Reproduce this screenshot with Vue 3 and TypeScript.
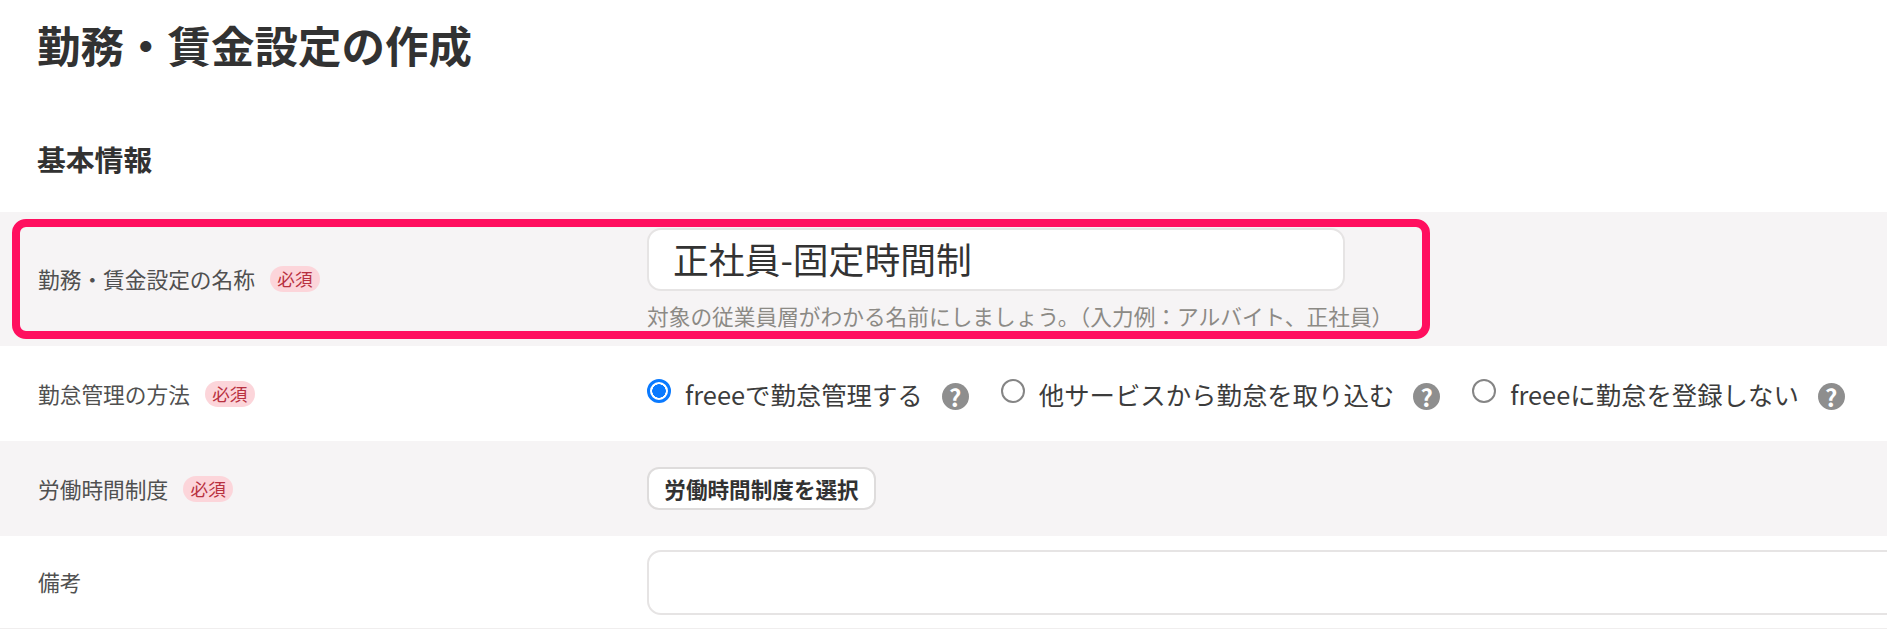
<script setup lang="ts">
interface Option { label: string; checked: boolean }
const options: Option[] = [
  { label: 'freeeで勤怠管理する', checked: true },
  { label: '他サービスから勤怠を取り込む', checked: false },
  { label: 'freeeに勤怠を登録しない', checked: false },
]
</script>

<template>
  <main class="page">
    <h1 class="title">勤務・賃金設定の作成</h1>
    <h2 class="section">基本情報</h2>

    <div class="row shaded first">
      <div class="label">勤務・賃金設定の名称<span class="badge">必須</span></div>
      <div class="value">
        <div class="input name">正社員-固定時間制</div>
        <p class="hint">対象の従業員層がわかる名前にしましょう。（入力例：アルバイト、正社員）</p>
      </div>
      <div class="highlight"></div>
    </div>

    <div class="row second">
      <div class="label">勤怠管理の方法<span class="badge">必須</span></div>
      <div class="value radios">
        <div v-for="o in options" :key="o.label" class="option">
          <span class="radio" :class="{ on: o.checked }"></span>
          <span class="radio-text">{{ o.label }}</span>
          <span class="help">?</span>
        </div>
      </div>
    </div>

    <div class="row shaded third">
      <div class="label">労働時間制度<span class="badge">必須</span></div>
      <div class="value">
        <button class="btn" type="button">労働時間制度を選択</button>
      </div>
    </div>

    <div class="row fourth">
      <div class="label">備考</div>
      <div class="value">
        <div class="input note"></div>
      </div>
    </div>
  </main>
</template>

<style>
html, body { margin: 0; background: #fff; }
</style>

<style scoped>
.page {
  width: 1887px;
  height: 629px;
  overflow: hidden;
  font-family: "Noto Sans CJK JP", "Noto Sans", sans-serif;
  color: #323232;
}
.title {
  margin: 0;
  padding: 15px 0 0 37px;
  height: 63px;
  font-size: 43.5px;
  line-height: 60px;
  font-weight: 700;
  white-space: nowrap;
}
.section {
  margin: 0;
  padding: 0 0 0 37px;
  height: 134px;
  box-sizing: border-box;
  padding-top: 61px;
  font-size: 28.8px;
  line-height: 40px;
  font-weight: 700;
}
.row {
  position: relative;
  display: flex;
  align-items: center;
  padding-left: 38px;
  box-sizing: border-box;
}
.shaded { background: #f6f4f5; }
.first { height: 134px; }
.second { height: 95px; }
.third { height: 95px; }
.fourth { height: 93px; border-bottom: 1px solid #f0eeee; }
.label {
  width: 609px;
  flex: none;
  display: flex;
  align-items: center;
  font-size: 21.7px;
  line-height: 30px;
  color: #505050;
}
.badge {
  margin-left: 15px;
  width: 50px;
  height: 26px;
  border-radius: 13px;
  background: #fcd5da;
  color: #b8303f;
  font-size: 17.6px;
  line-height: 26px;
  text-align: center;
}
.value { flex: 1; min-width: 0; }
.input {
  box-sizing: border-box;
  background: #fff;
  border: 2px solid #e6e4e4;
  border-radius: 14px;
}
.name {
  width: 698px;
  height: 63px;
  padding-left: 24px;
  font-size: 35.8px;
  line-height: 57px;
  color: #333;
}
.hint {
  margin: 11px 0 0;
  font-size: 21.7px;
  line-height: 28px;
  color: #8c8a85;
  white-space: nowrap;
}
.highlight {
  position: absolute;
  left: 12px;
  top: 7px;
  width: 1418px;
  height: 120px;
  box-sizing: border-box;
  border: 8px solid #ff0f5f;
  border-radius: 14px;
  pointer-events: none;
}
.radios {
  display: flex;
  align-items: center;
  gap: 32px;
  white-space: nowrap;
}
.option {
  display: flex;
  align-items: center;
}
.radio {
  width: 24px;
  height: 24px;
  box-sizing: border-box;
  margin-bottom: 6px;
  border: 2px solid #858585;
  border-radius: 50%;
  background: #fff;
}
.radio.on {
  border: 3px solid #0a7aff;
  background: radial-gradient(circle, #0a7aff 0 6.5px, #fff 7px);
}
.radio-text {
  margin-left: 14px;
  font-size: 25.4px;
  line-height: 34px;
  color: #3c3c3c;
}
.help {
  margin: 6px 0 0 19px;
  width: 27px;
  height: 27px;
  border-radius: 50%;
  background: #8e8e8e;
  color: #fff;
  font-size: 24px;
  font-weight: 700;
  line-height: 27px;
  text-align: center;
}
.btn {
  display: block;
  box-sizing: border-box;
  width: 229px;
  height: 43px;
  padding: 0;
  background: #fff;
  border: 2px solid #dedcdc;
  border-radius: 12px;
  font-family: inherit;
  font-size: 21.6px;
  font-weight: 700;
  line-height: 38px;
  color: #323232;
}
.note {
  width: 1400px;
  height: 65px;
}
</style>
